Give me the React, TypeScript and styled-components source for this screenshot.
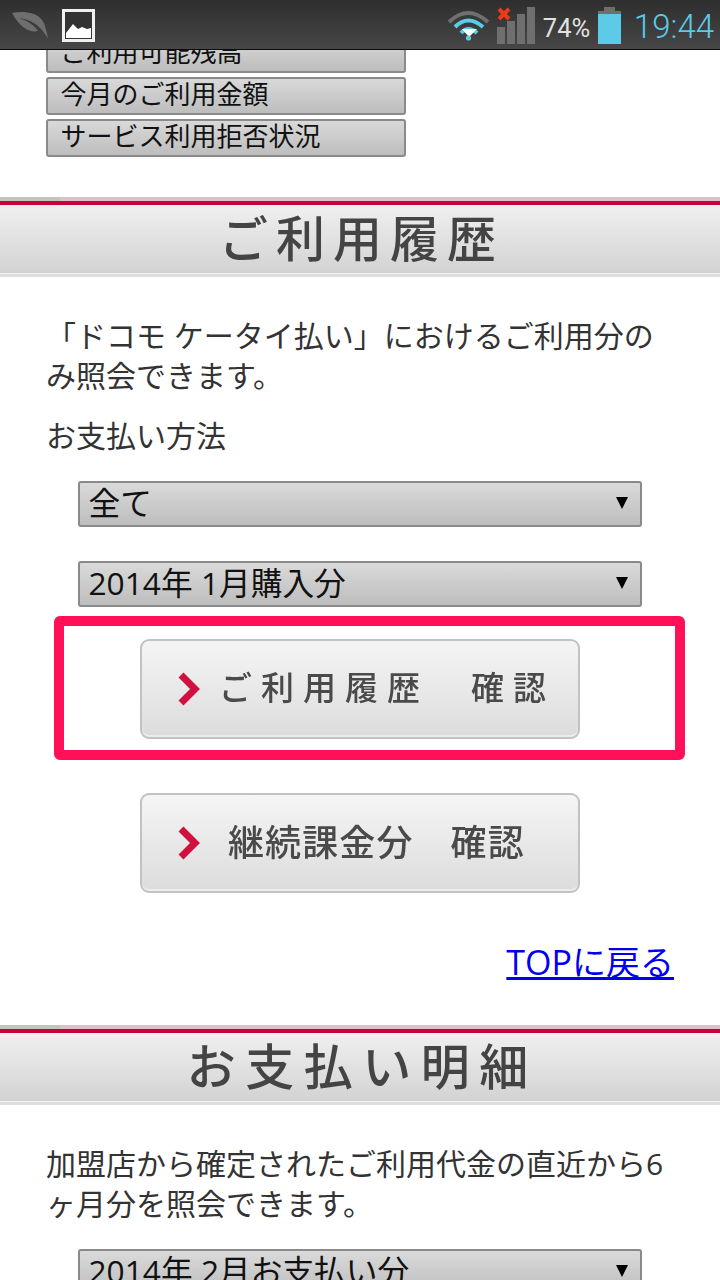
import styled, { createGlobalStyle } from "styled-components";

const GlobalStyle = createGlobalStyle`
  html, body {
    margin: 0;
    padding: 0;
    background: #fff;
  }
  * {
    box-sizing: border-box;
  }
`;

const FONT = `"Open Sans", "Noto Sans CJK JP", sans-serif`;

const LeafIcon = () => (
  <svg width="38" height="30" viewBox="0 0 38 30">
    <path
      d="M0 2 C10 0 24 1 30 9 C33 13 34 18 36 27 L37 29 C34 24 31 20 27 16 C22 11 15 8 7 7 C16 10 22 14 26 20 C18 22 8 17 0 2 Z"
      fill="#6e6e6e"
    />
  </svg>
);

const PictureIcon = () => (
  <svg width="33" height="33" viewBox="0 0 33 33">
    <rect x="1.5" y="1.5" width="30" height="30" fill="#333" stroke="#f0f0f0" strokeWidth="3" />
    <path d="M4 29 V24 L11 15 L16 20 L20 18 L25 20 L29 19 V29 Z" fill="#fff" />
  </svg>
);

const WifiIcon = () => (
  <svg width="44" height="36" viewBox="0 0 44 36" fill="none">
    <path d="M2 15 Q21 -3 41 15" stroke="#6f6f6f" strokeWidth="4" />
    <path d="M8 20 Q21 7 36 20" stroke="#5bcbe8" strokeWidth="4" />
    <path d="M14 26 Q21 18 30 26" stroke="#5bcbe8" strokeWidth="4" />
    <path d="M15 22 H30 L22 30 Z" fill="#fff" />
    <circle cx="21.5" cy="31" r="2.6" fill="#5bcbe8" />
  </svg>
);

const SignalIcon = () => (
  <svg width="38" height="38" viewBox="0 0 38 38">
    <rect x="0" y="20" width="8" height="17" fill="#6f6f6f" />
    <rect x="10" y="14" width="8" height="23" fill="#6f6f6f" />
    <rect x="20" y="7" width="8" height="30" fill="#6f6f6f" />
    <rect x="30" y="0" width="8" height="37" fill="#6f6f6f" />
    <path d="M2 2 L12 12 M12 2 L2 12" stroke="#f03a17" strokeWidth="4" />
  </svg>
);

const BatteryIcon = () => (
  <svg width="23" height="38" viewBox="0 0 23 38">
    <rect x="6" y="0" width="11" height="5" fill="#6f6f6f" />
    <rect x="0" y="4" width="23" height="4" fill="#6f6f6f" />
    <rect x="0" y="7" width="23" height="30" fill="#5bcbe8" />
  </svg>
);

const Chevron = () => (
  <svg width="24" height="34" viewBox="0 0 24 34" fill="none">
    <path d="M3 3 L17 17 L3 31" stroke="#d0103f" strokeWidth="7" />
  </svg>
);

const navItems = ["ご利用可能残高", "今月のご利用金額", "サービス利用拒否状況"];

export default function App() {
  return (
    <Screen>
      <GlobalStyle />
      <StatusBar>
        <NoticeIcons>
          <LeafIcon />
          <PictureIcon />
        </NoticeIcons>
        <SystemIcons>
          <WifiIcon />
          <SignalIcon />
          <Percent>74%</Percent>
          <BatteryIcon />
          <Clock>19:44</Clock>
        </SystemIcons>
      </StatusBar>

      <Page>
        <NavList>
          {navItems.map((item) => (
            <NavButton key={item}>{item}</NavButton>
          ))}
        </NavList>

        <SectionBand>
          <BandTitle $spacing={8}>ご利用履歴</BandTitle>
        </SectionBand>
        <SectionBody>
          <Paragraph>「ドコモ ケータイ払い」におけるご利用分のみ照会できます。</Paragraph>
          <Paragraph $top={20}>お支払い方法</Paragraph>
          <SelectBox $top={25}>
            <span>全て</span>
            <SelectArrow />
          </SelectBox>
          <SelectBox $top={34}>
            <span>2014年 1月購入分</span>
            <SelectArrow />
          </SelectBox>
          <ActionRow $top={32}>
            <ActionButton>
              <Chevron />
              <ActionLabel $size={33} $spacing={9} $gap={17}>
                ご利用履歴　確認
              </ActionLabel>
            </ActionButton>
            <Highlight />
          </ActionRow>
          <ActionRow $top={54}>
            <ActionButton>
              <Chevron />
              <ActionLabel $size={36} $spacing={1.1} $gap={26}>
                継続課金分　確認
              </ActionLabel>
            </ActionButton>
          </ActionRow>
          <TopLinkRow>
            <TopLink href="#top">TOPに戻る</TopLink>
          </TopLinkRow>
        </SectionBody>

        <SectionBand $top={36}>
          <BandTitle $spacing={9.5}>お支払い明細</BandTitle>
        </SectionBand>
        <SectionBody>
          <Paragraph>加盟店から確定されたご利用代金の直近から6ヶ月分を照会できます。</Paragraph>
          <SelectBox $top={25}>
            <span>2014年 2月お支払い分</span>
            <SelectArrow />
          </SelectBox>
        </SectionBody>
      </Page>
    </Screen>
  );
}

const Screen = styled.div`
  width: 720px;
  height: 1280px;
  overflow: hidden;
  display: flex;
  flex-direction: column;
  background: #fff;
  font-family: ${FONT};
`;

const StatusBar = styled.div`
  flex: none;
  height: 50px;
  display: flex;
  align-items: center;
  justify-content: space-between;
  padding: 0 6px 0 12px;
  background: linear-gradient(#2e2e2e, #474747);
  border-bottom: 1px solid #0a0a0a;
  position: relative;
  z-index: 2;
`;

const NoticeIcons = styled.div`
  display: flex;
  align-items: center;
  gap: 12px;
  margin-top: 2px;
`;

const SystemIcons = styled.div`
  display: flex;
  align-items: center;
  margin-top: 2px;

  & > svg:nth-child(2) {
    margin-left: 6px;
  }
  & > svg:nth-child(1) {
    margin-top: -2px;
  }
`;

const Percent = styled.span`
  font-family: Roboto, sans-serif;
  font-size: 25.5px;
  color: #e2e2e2;
  width: 47px;
  margin: 4px 8px 0;
`;

const Clock = styled.span`
  font-family: Roboto, sans-serif;
  font-weight: 300;
  font-size: 33px;
  color: #5bcbe8;
  margin-left: 13px;
  margin-top: 1px;
`;

const Page = styled.div`
  flex: 1;
  min-height: 0;
  overflow: hidden;
`;

const NavList = styled.div`
  display: flex;
  flex-direction: column;
  gap: 4.5px;
  margin: -15px 0 0 46px;
  position: relative;
  z-index: 0;
`;

const NavButton = styled.button`
  width: 360px;
  height: 37.5px;
  padding: 0 0 8px 12.5px;
  text-align: left;
  border: 2px solid #8a8a8a;
  border-radius: 3px;
  background: linear-gradient(#d9d9d9, #bdbdbd);
  color: #111;
  font-family: ${FONT};
  font-size: 26px;
  line-height: 30px;
  white-space: nowrap;
`;

const SectionBand = styled.div<{ $top?: number }>`
  height: 80px;
  margin-top: ${({ $top }) => $top ?? 40}px;
  display: flex;
  align-items: center;
  justify-content: center;
  padding-top: 2px;
  position: relative;
  border-top: 4px solid #d9c3c8;
  border-bottom: 3px solid #dedede;
  background: linear-gradient(#c8003c, #c8003c 4px, #f0f0f0 4px, #d2d2d2);
  box-shadow: inset 0 -1px 0 #f2f2f2;

  &::before {
    content: "";
    position: absolute;
    top: -4px;
    left: 0;
    width: 60px;
    height: 4px;
    background: #c6c3be;
  }
`;

const BandTitle = styled.h2<{ $spacing: number }>`
  margin: 0;
  font-size: 49px;
  font-weight: 500;
  line-height: 1;
  color: #444;
  letter-spacing: ${({ $spacing }) => $spacing}px;
  margin-right: ${({ $spacing }) => 5 - $spacing}px;
  filter: blur(0.6px);
`;

const SectionBody = styled.div`
  padding: 39px 46px 0;
`;

const Paragraph = styled.p<{ $top?: number }>`
  margin: ${({ $top }) => $top ?? 0}px 0 0;
  font-size: 30px;
  line-height: 40px;
  color: #333;
`;

const SelectBox = styled.div<{ $top: number }>`
  width: 564px;
  height: 46px;
  margin: ${({ $top }) => $top}px 0 0 32px;
  padding: 0 12px 2px 8.5px;
  display: flex;
  align-items: center;
  justify-content: space-between;
  border: 2px solid #8a8a8a;
  border-radius: 3px;
  background: linear-gradient(#dadada, #bdbdbd);
  color: #111;
  font-size: 31.7px;
  line-height: 40px;
  white-space: nowrap;
`;

const SelectArrow = styled.i`
  width: 0;
  height: 0;
  border-left: 6px solid transparent;
  border-right: 6px solid transparent;
  border-top: 12px solid #000;
`;

const ActionRow = styled.div<{ $top: number }>`
  position: relative;
  width: 440px;
  margin: ${({ $top }) => $top}px 0 0 94px;
`;

const ActionButton = styled.button`
  width: 440px;
  height: 100px;
  padding: 0 0 0 36px;
  display: flex;
  align-items: center;
  border: 2px solid #c2c2c2;
  border-radius: 9px;
  background: linear-gradient(#f5f5f5, #dcdcdc);
  box-shadow: inset 0 -2px 0 #ececec;
  font-family: ${FONT};
`;

const ActionLabel = styled.span<{ $size: number; $spacing: number; $gap: number }>`
  margin: -5px 0 0 ${({ $gap }) => $gap}px;
  font-size: ${({ $size }) => $size}px;
  font-weight: 500;
  letter-spacing: ${({ $spacing }) => $spacing}px;
  color: #4a4a4a;
  white-space: nowrap;
  filter: blur(0.5px);
`;

const Highlight = styled.div`
  position: absolute;
  top: -23px;
  bottom: -21px;
  left: -86px;
  right: -105px;
  border: 10px solid #ff1058;
  border-radius: 6px;
  pointer-events: none;
`;

const TopLinkRow = styled.div`
  margin-top: 49px;
  text-align: right;
  line-height: 40px;
`;

const TopLink = styled.a`
  font-size: 34px;
  color: #0000ee;
`;
